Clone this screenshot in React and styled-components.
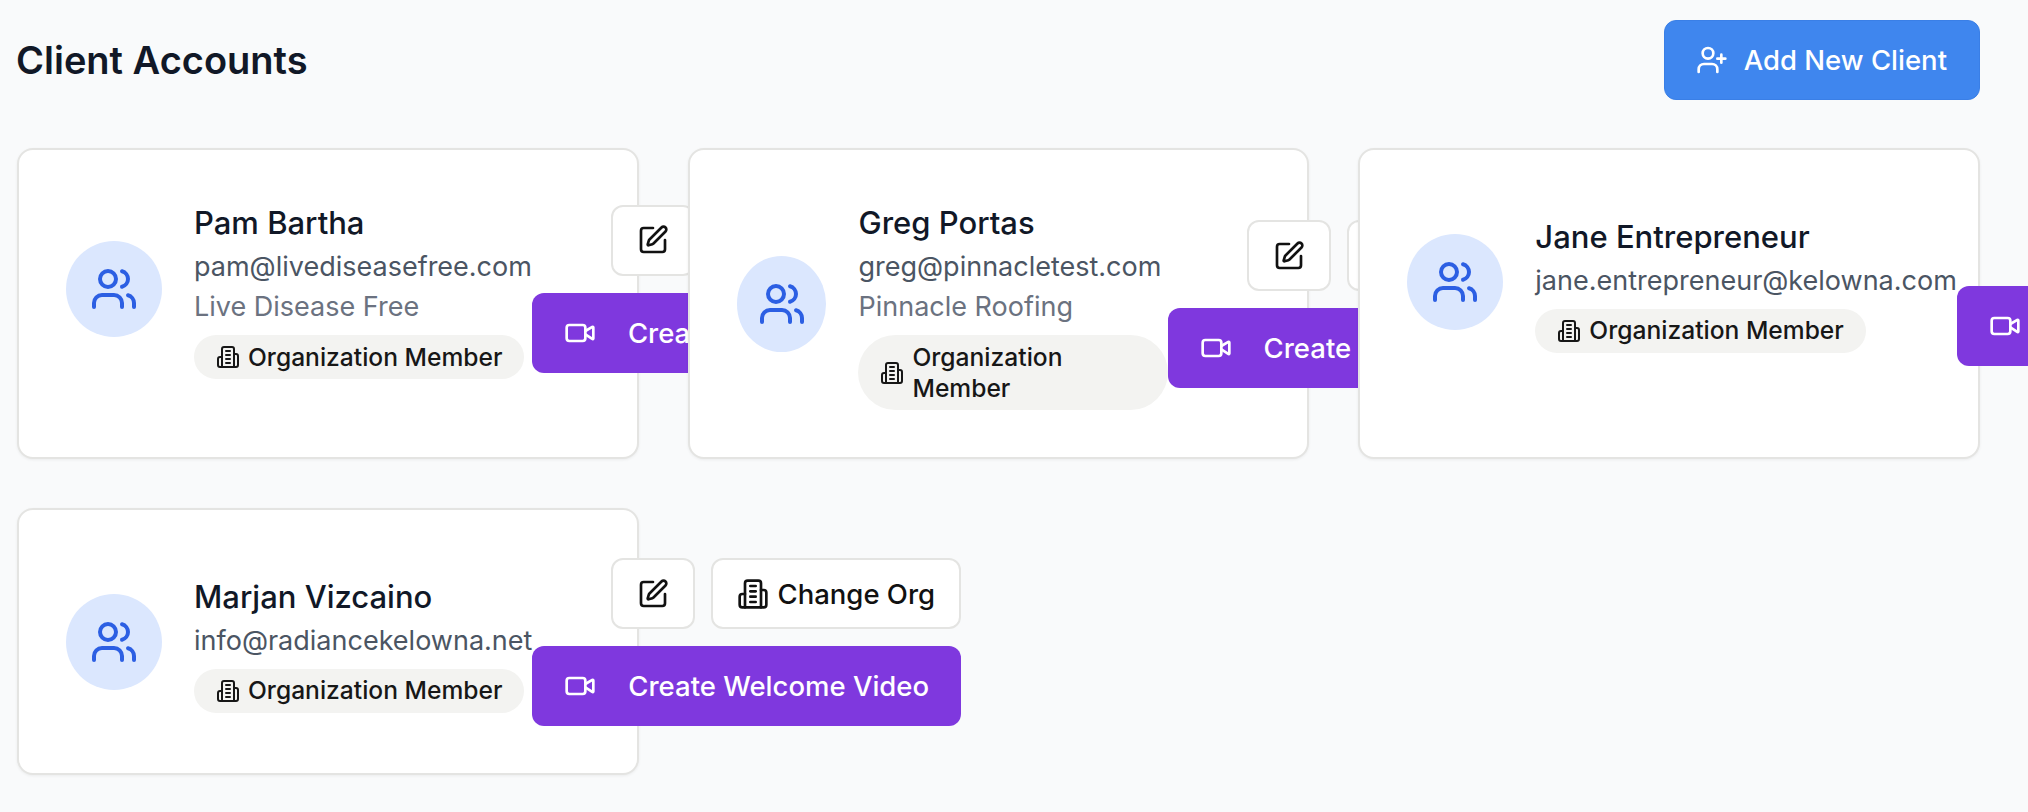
import React from "react";
import styled, { createGlobalStyle } from "styled-components";
import { Users, UserPlus, SquarePen, Video } from "lucide-react";

const Global = createGlobalStyle`
  html, body { margin: 0; padding: 0; background: #f9fafb; overflow-x: hidden; }
  body { font-family: Inter, "Noto Sans", sans-serif; color: #111827; -webkit-font-smoothing: antialiased; }
  * { box-sizing: border-box; }
`;

const Page = styled.div`
  padding: 20px 48px 36px 17px;
  width: 2028px;
`;

const Header = styled.header`
  display: flex;
  align-items: center;
  justify-content: space-between;
  margin-bottom: 48px;
  margin-left: -1px;
`;

const Title = styled.h1`
  margin: 0;
  font-size: 38px;
  line-height: 52px;
  font-weight: 600;
  color: #111827;
`;

const BaseButton = styled.button`
  display: inline-flex;
  align-items: center;
  font-family: inherit;
  font-size: 27.5px;
  line-height: 40px;
  font-weight: 500;
  white-space: nowrap;
  border-radius: 12px;
  cursor: pointer;
`;

const AddButton = styled(BaseButton)`
  height: 80px;
  padding: 0 32px 0 31px;
  gap: 16px;
  color: #fff;
  background: #3f86ee;
  border: 1px solid #3a7fe6;
`;

const Grid = styled.div`
  display: grid;
  grid-template-columns: repeat(3, 1fr);
  gap: 49px;
`;

const Card = styled.article`
  background: #fff;
  border: 2px solid #e4e4e2;
  border-radius: 16px;
  box-shadow: 0 1px 3px rgba(0, 0, 0, 0.06);
  padding: 48px 47px 47px;
  min-width: 0;
`;

const CardRow = styled.div`
  display: flex;
  align-items: center;
  justify-content: space-between;
`;

const Person = styled.div`
  display: flex;
  align-items: center;
  gap: 32px;
`;

const Avatar = styled.div`
  width: 96px;
  height: 96px;
  border-radius: 50%;
  background: #dbe7fe;
  color: #2c5fe3;
  display: flex;
  align-items: center;
  justify-content: center;
`;

const Info = styled.div``;

const Name = styled.h3`
  margin: 0;
  font-size: 31px;
  line-height: 49px;
  font-weight: 500;
  color: #111827;
`;

const Email = styled.p`
  margin: 0;
  font-size: 27px;
  line-height: 40px;
  color: #4b5563;
`;

const Company = styled(Email)`
  color: #6b7280;
`;

const Badge = styled.span`
  display: inline-flex;
  align-items: center;
  gap: 8px;
  margin-top: 8px;
  padding: 6.5px 22px;
  border-radius: 999px;
  background: #f3f3f1;
  color: #171717;
  font-size: 24.6px;
  line-height: 31px;
  font-weight: 500;
  vertical-align: top;
  svg { flex-shrink: 0; }
`;

const Actions = styled.div`
  display: flex;
  flex-direction: column;
  align-items: flex-end;
  gap: 17px;
  flex-shrink: 0;
`;

const ActionTop = styled.div`
  display: flex;
  gap: 16px;
`;

const OutlineButton = styled(BaseButton)`
  height: 71px;
  gap: 8px;
  padding: 0 24px;
  background: #fff;
  color: #111;
  border: 2px solid #e4e4e2;
`;

const VideoButton = styled(BaseButton)`
  height: 80px;
  padding: 0 32px;
  gap: 32px;
  color: #fff;
  background: #7f38de;
  border: none;
`;

function OrgIcon({ size }) {
  return (
    <svg width={size} height={size} viewBox="0 0 24 24" fill="none" stroke="currentColor" strokeWidth="2" strokeLinecap="round" strokeLinejoin="round">
      <path d="M6 22V4a2 2 0 0 1 2-2h8a2 2 0 0 1 2 2v18Z" />
      <path d="M6 12H4a2 2 0 0 0-2 2v6a2 2 0 0 0 2 2h2" />
      <path d="M18 9h2a2 2 0 0 1 2 2v9a2 2 0 0 1-2 2h-2" />
      <path d="M10 6h4" />
      <path d="M10 10h4" />
      <path d="M10 14h4" />
      <path d="M10 18h4" />
    </svg>
  );
}

const clients = [
  { name: "Pam Bartha", email: "pam@livediseasefree.com", company: "Live Disease Free" },
  { name: "Greg Portas", email: "greg@pinnacletest.com", company: "Pinnacle Roofing" },
  { name: "Jane Entrepreneur", email: "jane.entrepreneur@kelowna.com" },
  { name: "Marjan Vizcaino", email: "info@radiancekelowna.net" },
];

function ClientCard({ name, email, company }) {
  return (
    <Card>
      <CardRow>
        <Person>
          <Avatar><Users size={48} strokeWidth={2} /></Avatar>
          <Info>
            <Name>{name}</Name>
            <Email>{email}</Email>
            {company && <Company>{company}</Company>}
            <Badge><OrgIcon size={24} />Organization Member</Badge>
          </Info>
        </Person>
        <Actions>
          <ActionTop>
            <OutlineButton><SquarePen size={32} strokeWidth={2} /></OutlineButton>
            <OutlineButton><OrgIcon size={32} />Change Org</OutlineButton>
          </ActionTop>
          <VideoButton><Video size={32} strokeWidth={2} />Create Welcome Video</VideoButton>
        </Actions>
      </CardRow>
    </Card>
  );
}

export default function App() {
  return (
    <Page>
      <Global />
      <Header>
        <Title>Client Accounts</Title>
        <AddButton><UserPlus size={32} strokeWidth={2} />Add New Client</AddButton>
      </Header>
      <Grid>
        {clients.map((c) => <ClientCard key={c.email} {...c} />)}
      </Grid>
    </Page>
  );
}
